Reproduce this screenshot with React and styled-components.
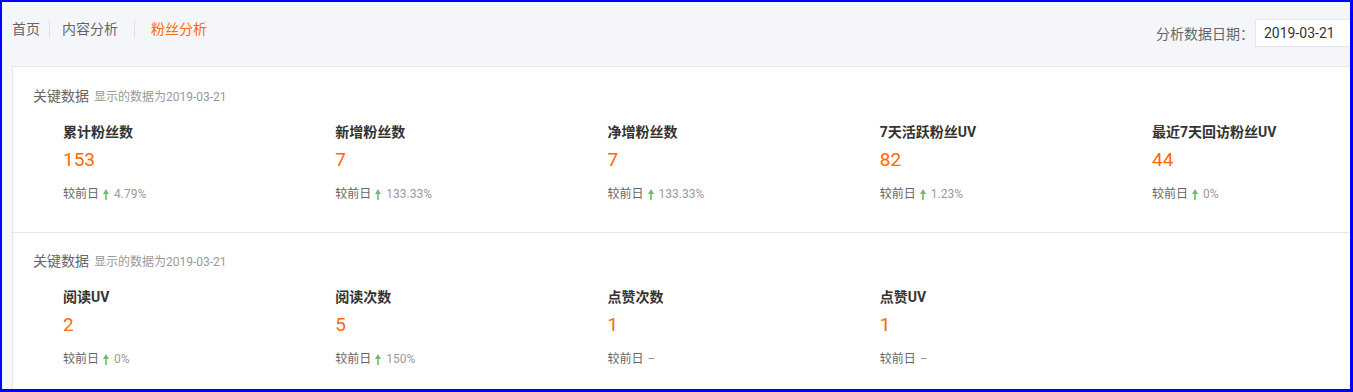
import React from "react";
import styled, { createGlobalStyle } from "styled-components";

const GlobalStyle = createGlobalStyle`
  body {
    margin: 0;
    font-family: Roboto, "Noto Sans CJK SC", sans-serif;
  }
`;

const Frame = styled.div`
  width: 1353px;
  height: 392px;
  box-sizing: border-box;
  border: 2px solid #0000ff;
  border-right-width: 3px;
  border-bottom-width: 3px;
  background: #f5f6fa;
  overflow: hidden;
`;

const Header = styled.div`
  height: 64px;
  display: flex;
  align-items: center;
  justify-content: space-between;
  padding-left: 10px;
  margin-right: -20px;
`;

const Nav = styled.div`
  display: flex;
  align-items: center;
  margin-top: -10px;
`;

const NavItem = styled.span`
  font-size: 14px;
  line-height: 20px;
  color: ${({ active }) => (active ? "#ff6a00" : "#666")};
`;

const NavDivider = styled.span`
  width: 1px;
  height: 18px;
  background: #e3e3e6;
  margin: 0 ${({ right }) => right}px 0 ${({ left }) => left}px;
`;

const DatePicker = styled.div`
  display: flex;
  align-items: center;
  margin-top: -3px;
`;

const DateLabel = styled.span`
  font-size: 14px;
  color: #666;
  margin-right: 1px;
`;

const DateBox = styled.div`
  width: 105px;
  height: 26px;
  box-sizing: content-box;
  border: 1px solid #e6e6ea;
  background: #fff;
  padding-left: 8px;
  font-size: 14px;
  line-height: 26px;
  color: #333;
`;

const Card = styled.div`
  margin: 0 -20px 0 10px;
  background: #fff;
  border: 1px solid #e6e7eb;
`;

const Section = styled.div`
  padding: 19px 0 29px 20px;
  & + & {
    border-top: 1px solid #e8e8e8;
    padding-top: 18px;
  }
`;

const SectionHead = styled.div`
  font-size: 14px;
  line-height: 20px;
  color: #666;
`;

const SectionSub = styled.span`
  font-size: 12px;
  color: #999;
  margin-left: 5px;
`;

const Grid = styled.div`
  display: grid;
  grid-template-columns: repeat(5, 272.25px);
  margin: 15px 0 0 30px;
`;

const Metric = styled.div`
  display: flex;
  flex-direction: column;
`;

const MetricLabel = styled.div`
  font-size: 14px;
  line-height: 20px;
  font-weight: 700;
  color: #333;
`;

const MetricValue = styled.div`
  font-size: 19px;
  line-height: 24px;
  color: #ff6a00;
  margin-top: 6px;
`;

const Compare = styled.div`
  display: flex;
  align-items: center;
  font-size: 12px;
  line-height: 18px;
  color: #666;
  margin-top: 13px;
`;

const Change = styled.span`
  color: #999;
  margin-left: ${({ gap }) => gap}px;
`;

const Arrow = styled.svg`
  width: 6px;
  height: 11px;
  margin-left: 4px;
`;

const UpArrow = () => (
  <Arrow viewBox="0 0 6 11">
    <path d="M3 0 L6 5 L0 5 Z M2.2 5 H3.8 V11 H2.2 Z" fill="#6cc06c" />
  </Arrow>
);

const sections = [
  [
    { label: "累计粉丝数", value: "153", change: "4.79%" },
    { label: "新增粉丝数", value: "7", change: "133.33%" },
    { label: "净增粉丝数", value: "7", change: "133.33%" },
    { label: "7天活跃粉丝UV", value: "82", change: "1.23%" },
    { label: "最近7天回访粉丝UV", value: "44", change: "0%" },
  ],
  [
    { label: "阅读UV", value: "2", change: "0%" },
    { label: "阅读次数", value: "5", change: "150%" },
    { label: "点赞次数", value: "1", change: null },
    { label: "点赞UV", value: "1", change: null },
  ],
];

const App = () => (
  <Frame>
    <GlobalStyle />
    <Header>
      <Nav>
        <NavItem>首页</NavItem>
        <NavDivider left={9} right={12} />
        <NavItem>内容分析</NavItem>
        <NavDivider left={16} right={16} />
        <NavItem active>粉丝分析</NavItem>
      </Nav>
      <DatePicker>
        <DateLabel>分析数据日期：</DateLabel>
        <DateBox>2019-03-21</DateBox>
      </DatePicker>
    </Header>
    <Card>
      {sections.map((items, i) => (
        <Section key={i}>
          <SectionHead>
            关键数据<SectionSub>显示的数据为2019-03-21</SectionSub>
          </SectionHead>
          <Grid>
            {items.map((item) => (
              <Metric key={item.label}>
                <MetricLabel>{item.label}</MetricLabel>
                <MetricValue>{item.value}</MetricValue>
                <Compare>
                  较前日
                  {item.change ? (
                    <>
                      <UpArrow />
                      <Change gap={5}>{item.change}</Change>
                    </>
                  ) : (
                    <Change gap={4}>–</Change>
                  )}
                </Compare>
              </Metric>
            ))}
          </Grid>
        </Section>
      ))}
    </Card>
  </Frame>
);

export default App;
